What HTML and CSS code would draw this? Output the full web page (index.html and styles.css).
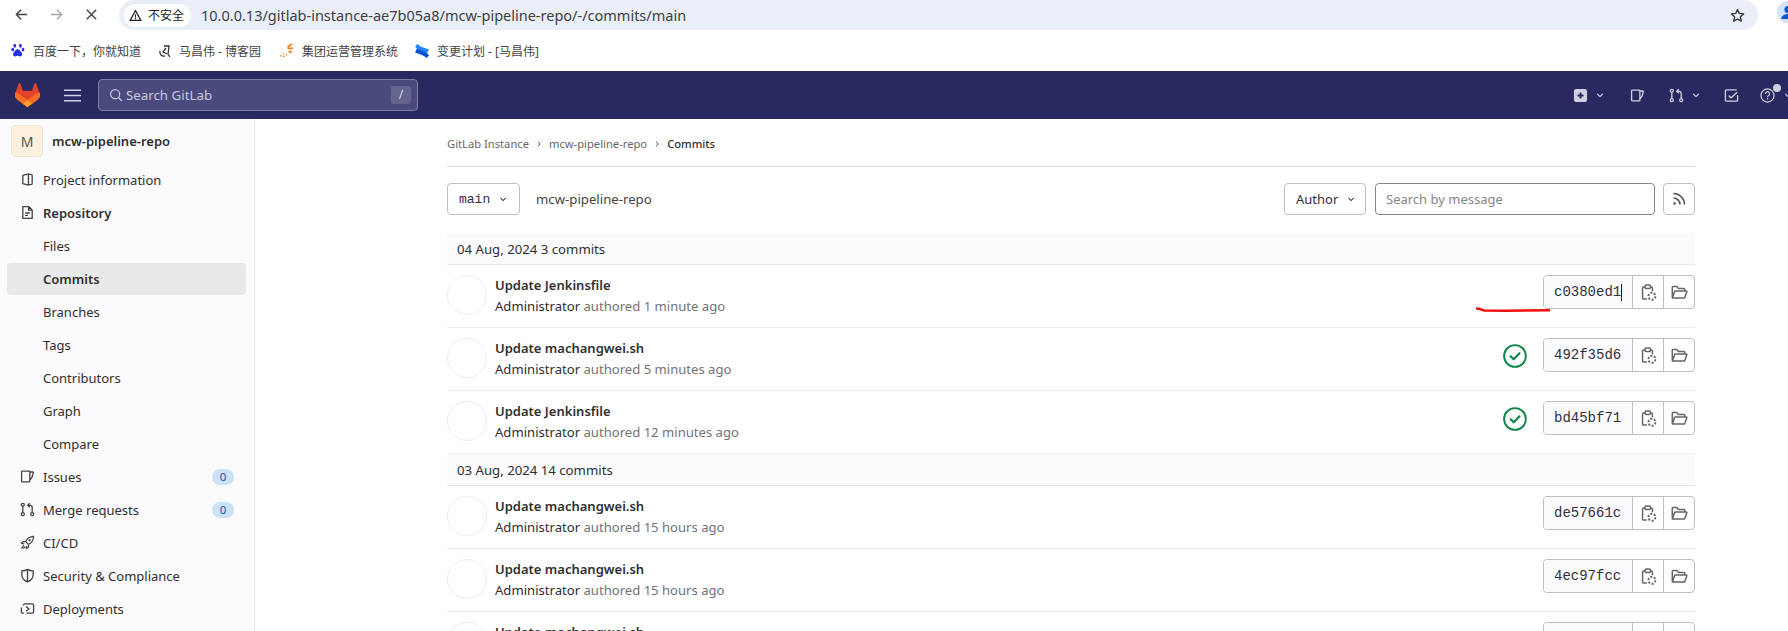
FILE: index.html
```html
<!DOCTYPE html>
<html lang="en">
<head>
  <meta charset="UTF-8">
  <title>Commits - mcw-pipeline-repo</title>
  <link rel="stylesheet" href="styles.css">
</head>
<body>
  <svg class="defs" width="0" height="0">
    <symbol id="i-chevron" viewBox="0 0 16 16"><path d="M4.22 6.22a.75.75 0 0 1 1.06 0L8 8.94l2.72-2.72a.75.75 0 1 1 1.06 1.06l-3.25 3.25a.75.75 0 0 1-1.06 0L4.22 7.28a.75.75 0 0 1 0-1.06z" fill="currentColor"/></symbol>
    <symbol id="i-issues" viewBox="0 0 16 16"><path d="M2.5 2.2h7.2a.8.8 0 0 1 .8.8v10a.8.8 0 0 1-.8.8H2.5a.8.8 0 0 1-.8-.8V3a.8.8 0 0 1 .8-.8zM10.5 3.2h3.2a.5.5 0 0 1 .5.6l-1.2 4.6-2.5 3.6" fill="none" stroke="currentColor" stroke-width="1.4" stroke-linejoin="round"/></symbol>
    <symbol id="i-mr" viewBox="0 0 16 16"><g fill="none" stroke="currentColor" stroke-width="1.4"><circle cx="3" cy="3" r="1.6"/><circle cx="3" cy="13" r="1.6"/><circle cx="13" cy="13" r="1.6"/><path d="M3 4.6v6.8M13 11.4V5.5a2 2 0 0 0-2-2H8.6M10.4 1.4 8.3 3.5l2.1 2.1"/></g></symbol>
    <symbol id="i-copy" viewBox="0 0 16 16"><g fill="none" stroke="currentColor" stroke-width="1.4"><path d="M6.5 14.2H3.4a1 1 0 0 1-1-1V3.800a1 1 0 0 1 1-1h1.400M9.800 2.800h.9a1 1 0 0 1 1 1v3"/><rect x="4.800" y="1" width="5" height="3.200" rx=".8"/><circle cx="11.200" cy="11.500" r="3.300" stroke-width="1.800" stroke-dasharray="2 1.400"/></g></symbol>
    <symbol id="i-folder" viewBox="0 0 16 16"><path d="M1.2 12.8V3.2a.8.8 0 0 1 .8-.8h3.4l1.6 1.8h5.2a.8.8 0 0 1 .8.8v1.6M1.3 13.2 3.4 7a.6.6 0 0 1 .6-.4h10.4a.5.5 0 0 1 .5.7l-1.9 5.4a.7.7 0 0 1-.7.5H1.6z" fill="none" stroke="currentColor" stroke-width="1.4" stroke-linejoin="round"/></symbol>
    <symbol id="i-check" viewBox="0 0 24 24"><circle cx="12" cy="12" r="10.9" fill="none" stroke="currentColor" stroke-width="1.9"/><path d="m7.6 12.3 3.1 3 5.8-6" fill="none" stroke="currentColor" stroke-width="2.2" stroke-linecap="round" stroke-linejoin="round"/></symbol>
  </svg>

  <div class="browser-bar">
    <div class="browser-nav">
      <svg class="bicon" viewBox="0 0 16 16"><path d="M14 8H2.5M7.5 3 2.5 8l5 5" fill="none" stroke="#444" stroke-width="1.5"/></svg>
      <svg class="bicon" viewBox="0 0 16 16"><path d="M2 8h11.5M8.5 3l5 5-5 5" fill="none" stroke="#a6a6a6" stroke-width="1.5"/></svg>
      <svg class="bicon" viewBox="0 0 16 16"><path d="m3 3 10 10M13 3 3 13" fill="none" stroke="#444" stroke-width="1.5"/></svg>
    </div>
    <div class="address">
      <span class="not-secure">
        <svg class="warn" viewBox="0 0 16 16"><path d="M8 2 14.6 14H1.4z" fill="none" stroke="#222" stroke-width="1.5"/><path d="M8 6.4v4M8 11.2v1.3" stroke="#222" stroke-width="1.3"/></svg>
        不安全
      </span>
      <span class="url">10.0.0.13/gitlab-instance-ae7b05a8/mcw-pipeline-repo/-/commits/main</span>
      <svg class="star" viewBox="0 0 16 16"><path d="m8 1.6 1.9 4.2 4.6.5-3.4 3.1.9 4.6L8 11.7 4 14l.9-4.6L1.5 6.3l4.6-.5z" fill="none" stroke="#333" stroke-width="1.4" stroke-linejoin="round"/></svg>
    </div>
    <div class="profile">
      <svg viewBox="0 0 22 22" width="22" height="22"><circle cx="11" cy="11" r="11" fill="#d3e3fd"/><circle cx="11" cy="8.5" r="3.6" fill="#0b57d0"/><path d="M4 18c1-4 4-5 7-5s6 1 7 5z" fill="#0b57d0"/></svg>
    </div>
  </div>

  <div class="bookmarks">
    <a class="bookmark bm-baidu">
      <svg viewBox="0 0 14 14" width="15" height="15"><g fill="#2932e1"><ellipse cx="3.5" cy="2.6" rx="1.3" ry="1.9"/><ellipse cx="8.8" cy="2.6" rx="1.3" ry="1.9"/><ellipse cx="1.6" cy="6.2" rx="1.3" ry="1.7"/><ellipse cx="11.2" cy="6.2" rx="1.3" ry="1.7"/><path d="M6.2 5.8c2 0 2.2 1.6 3.6 3 1.2 1.3.6 3.8-1.4 3.7-1 0-1.4-.5-2.2-.5s-1.2.5-2.2.5c-2 .1-2.6-2.4-1.4-3.7 1.4-1.4 1.6-3 3.6-3z"/></g></svg>
      百度一下，你就知道
    </a>
    <a class="bookmark bm-blog">
      <svg viewBox="0 0 14 14" width="14" height="14"><path d="M2 7a4 4 0 0 0 5 5M6 2h5l-1 8 2 3M8 4 5 8l4 2" fill="none" stroke="#333" stroke-width="1.3"/></svg>
      马昌伟 - 博客园
    </a>
    <a class="bookmark bm-group">
      <svg viewBox="0 0 14 14" width="15" height="15"><path d="M12 1 8 4M13 5H8M12 9 9 7.5" stroke="#f58220" stroke-width="1.8" fill="none"/><path d="M1 12h1.5M4 12.5h1.5M6.5 11h1M3.5 10h1" stroke="#f58220" stroke-width="1.3"/></svg>
      集团运营管理系统
    </a>
    <a class="bookmark bm-conf">
      <svg viewBox="0 0 16 16" width="16" height="16"><path d="M1 3.5 3.5 1C6 4 10 4.5 15 6.5l-2 4C9 8 5 8.5 1 3.5z" fill="#2684ff"/><path d="M15 12.5 12.5 15C10 12 6 11.5 1 9.5l2-4c4 2.5 8 2 12 7z" fill="#0052cc"/></svg>
      变更计划 - [马昌伟]
    </a>
  </div>

  <header class="navbar">
    <svg class="tanuki" viewBox="0 0 25 24">
      <path fill="#E24329" d="m24.507 9.5-.034-.09L21.082.562a.896.896 0 0 0-1.694.091l-2.29 7.01H7.825L5.535.653a.898.898 0 0 0-1.694-.09L.451 9.411.416 9.5a6.297 6.297 0 0 0 2.09 7.278l.012.01.03.022 5.16 3.867 2.56 1.935 1.554 1.176a1.051 1.051 0 0 0 1.268 0l1.555-1.176 2.56-1.935 5.197-3.89.014-.01A6.297 6.297 0 0 0 24.507 9.5Z"/>
      <path fill="#FC6D26" d="m24.507 9.5-.034-.09a11.44 11.44 0 0 0-4.56 2.051l-7.447 5.632 4.742 3.584 5.197-3.89.014-.01A6.297 6.297 0 0 0 24.507 9.5Z"/>
      <path fill="#FCA326" d="m7.707 20.677 2.56 1.935 1.555 1.176a1.051 1.051 0 0 0 1.268 0l1.555-1.176 2.56-1.935-4.743-3.584-4.755 3.584Z"/>
      <path fill="#FC6D26" d="M5.01 11.461a11.43 11.43 0 0 0-4.56-2.05L.416 9.5a6.297 6.297 0 0 0 2.09 7.278l.012.01.03.022 5.16 3.867 4.745-3.584-7.444-5.632Z"/>
    </svg>
    <svg class="hamburger" viewBox="0 0 17 13"><path d="M0 1.2h17M0 6.5h17M0 11.8h17" stroke="#d1d0e3" stroke-width="1.6"/></svg>
    <div class="nav-search">
      <svg class="nav-search-icon" viewBox="0 0 16 16"><circle cx="7" cy="7" r="5.2" fill="none" stroke="#c9c9e0" stroke-width="1.4"/><path d="m10.8 10.8 4 4" stroke="#c9c9e0" stroke-width="1.4"/></svg>
      <span class="nav-search-text">Search GitLab</span>
      <kbd class="slash">/</kbd>
    </div>
    <div class="nav-right">
      <span class="nav-item">
        <svg class="nav-icon" viewBox="0 0 16 16"><rect x="1" y="1" width="14" height="14" rx="2.5" fill="#d1d0e3"/><path d="M8 4.8v6.4M4.8 8h6.4" stroke="#292961" stroke-width="2"/></svg>
        <svg class="nav-chev"><use href="#i-chevron"/></svg>
      </span>
      <span class="nav-item"><svg class="nav-icon"><use href="#i-issues"/></svg></span>
      <span class="nav-item">
        <svg class="nav-icon"><use href="#i-mr"/></svg>
        <svg class="nav-chev"><use href="#i-chevron"/></svg>
      </span>
      <span class="nav-item"><svg class="nav-icon" viewBox="0 0 16 16"><path d="M14.5 7.5V13a1 1 0 0 1-1 1H2.5a1 1 0 0 1-1-1V3a1 1 0 0 1 1-1h11" fill="none" stroke="currentColor" stroke-width="1.4"/><path d="m5 8 2.5 2.5L14 4.5" fill="none" stroke="currentColor" stroke-width="1.4"/></svg></span>
      <span class="nav-item nav-help">
        <svg class="nav-icon" viewBox="0 0 16 16"><circle cx="8" cy="8" r="7" fill="none" stroke="currentColor" stroke-width="1.3"/><path d="M5.8 6.2a2.2 2.2 0 1 1 3.3 1.9c-.7.4-1.1.9-1.1 1.7M8 11v1.3" fill="none" stroke="currentColor" stroke-width="1.3"/></svg>
        <span class="nav-dot"></span>
        <svg class="nav-chev"><use href="#i-chevron"/></svg>
      </span>
    </div>
  </header>

  <div class="layout">
    <aside class="sidebar">
      <div class="project-head">
        <span class="project-avatar">M</span>
        <span class="project-name">mcw-pipeline-repo</span>
      </div>
      <a class="side-link">
        <svg class="side-icon" viewBox="0 0 16 16"><path d="M9 2 3 3.500v9L9 14zM9 2.500h2.500a1.500 1.500 0 0 1 1.500 1.500v8a1.500 1.500 0 0 1-1.500 1.500H9" fill="none" stroke="currentColor" stroke-width="1.4" stroke-linejoin="round"/></svg>
        Project information
      </a>
      <a class="side-link is-parent">
        <svg class="side-icon" viewBox="0 0 16 16"><path d="M3 1.800h6.500L13 5.300v8.900H3zM9.200 1.800v3.700H13M5.500 8.500h5M5.500 11h3" fill="none" stroke="currentColor" stroke-width="1.4" stroke-linejoin="round"/></svg>
        Repository
      </a>
      <a class="side-link">Files</a>
      <a class="side-link is-active">Commits</a>
      <a class="side-link">Branches</a>
      <a class="side-link">Tags</a>
      <a class="side-link">Contributors</a>
      <a class="side-link">Graph</a>
      <a class="side-link">Compare</a>
      <a class="side-link">
        <svg class="side-icon"><use href="#i-issues"/></svg>
        Issues
        <span class="badge">0</span>
      </a>
      <a class="side-link">
        <svg class="side-icon"><use href="#i-mr"/></svg>
        Merge requests
        <span class="badge">0</span>
      </a>
      <a class="side-link">
        <svg class="side-icon" viewBox="0 0 16 16"><path d="M14.5 1.5c-4 .2-6.800 2-8.500 5.500l3 3c3.500-1.700 5.300-4.500 5.500-8.500zM6 7H3L1.500 9l3 .5M9 10v3l-2 1.500-.5-3M4 11l-2.500 3.500M5.500 12.500 3.500 14.500" fill="none" stroke="currentColor" stroke-width="1.3" stroke-linejoin="round"/><circle cx="10.3" cy="5.7" r="1.2" fill="currentColor"/></svg>
        CI/CD
      </a>
      <a class="side-link">
        <svg class="side-icon" viewBox="0 0 16 16"><path d="M2 3c2.500 0 4.500-.5 6-1.500C9.500 2.500 11.500 3 14 3v4.500c0 3.500-2.500 6-6 7.300-3.500-1.300-6-3.800-6-7.300zM8 2v12.500" fill="none" stroke="currentColor" stroke-width="1.4" stroke-linejoin="round"/></svg>
        Security &amp; Compliance
      </a>
      <a class="side-link">
        <svg class="side-icon" viewBox="0 0 16 16"><path d="M4 13H3a1.500 1.500 0 0 1-1.500-1.500V7M3 4.500 5 3h8a1.500 1.500 0 0 1 1.500 1.500v7A1.500 1.500 0 0 1 13 13H7M6.500 6l3 2.500-3 2.500" fill="none" stroke="currentColor" stroke-width="1.4"/></svg>
        Deployments
      </a>
    </aside>

    <main class="content">
      <nav class="crumbs">
        <span>GitLab Instance</span>
        <svg class="crumb-sep"><use href="#i-chevron"/></svg>
        <span>mcw-pipeline-repo</span>
        <svg class="crumb-sep"><use href="#i-chevron"/></svg>
        <strong>Commits</strong>
      </nav>

      <div class="toolbar">
        <button class="btn btn-branch">main <svg class="chev"><use href="#i-chevron"/></svg></button>
        <span class="repo-path">mcw-pipeline-repo</span>
        <button class="btn btn-author">Author <svg class="chev"><use href="#i-chevron"/></svg></button>
        <input class="search-msg" type="text" placeholder="Search by message">
        <button class="btn btn-rss">
          <svg viewBox="0 0 16 16" width="16" height="16"><path d="M2.5 2.5c6 0 11 5 11 11M2.5 7c3.600 0 6.500 2.900 6.500 6.500" fill="none" stroke="#555" stroke-width="1.6"/><circle cx="3.5" cy="12.5" r="1.3" fill="#555"/></svg>
        </button>
      </div>

      <div class="day">04 Aug, 2024 3 commits</div>

      <div class="commit">
        <span class="avatar"></span>
        <div class="commit-text">
          <div class="commit-title">Update Jenkinsfile</div>
          <div class="commit-meta"><b>Administrator</b> authored 1 minute ago</div>
        </div>
        <div class="sha-group">
          <span class="sha">c0380ed1<i class="caret"></i></span>
          <span class="sha-btn"><svg><use href="#i-copy"/></svg></span>
          <span class="sha-btn"><svg><use href="#i-folder"/></svg></span>
        </div>
        <svg class="scribble" viewBox="0 0 74 6" width="74" height="6"><path d="M0 1.500 3 1.800 8 3.500 30 3.800 74 3.200" fill="none" stroke="#f01010" stroke-width="2.4"/></svg>
      </div>

      <div class="commit">
        <span class="avatar"></span>
        <div class="commit-text">
          <div class="commit-title">Update machangwei.sh</div>
          <div class="commit-meta"><b>Administrator</b> authored 5 minutes ago</div>
        </div>
        <svg class="status-ok"><use href="#i-check"/></svg>
        <div class="sha-group">
          <span class="sha">492f35d6</span>
          <span class="sha-btn"><svg><use href="#i-copy"/></svg></span>
          <span class="sha-btn"><svg><use href="#i-folder"/></svg></span>
        </div>
      </div>

      <div class="commit">
        <span class="avatar"></span>
        <div class="commit-text">
          <div class="commit-title">Update Jenkinsfile</div>
          <div class="commit-meta"><b>Administrator</b> authored 12 minutes ago</div>
        </div>
        <svg class="status-ok"><use href="#i-check"/></svg>
        <div class="sha-group">
          <span class="sha">bd45bf71</span>
          <span class="sha-btn"><svg><use href="#i-copy"/></svg></span>
          <span class="sha-btn"><svg><use href="#i-folder"/></svg></span>
        </div>
      </div>

      <div class="day">03 Aug, 2024 14 commits</div>

      <div class="commit">
        <span class="avatar"></span>
        <div class="commit-text">
          <div class="commit-title">Update machangwei.sh</div>
          <div class="commit-meta"><b>Administrator</b> authored 15 hours ago</div>
        </div>
        <div class="sha-group">
          <span class="sha">de57661c</span>
          <span class="sha-btn"><svg><use href="#i-copy"/></svg></span>
          <span class="sha-btn"><svg><use href="#i-folder"/></svg></span>
        </div>
      </div>

      <div class="commit">
        <span class="avatar"></span>
        <div class="commit-text">
          <div class="commit-title">Update machangwei.sh</div>
          <div class="commit-meta"><b>Administrator</b> authored 15 hours ago</div>
        </div>
        <div class="sha-group">
          <span class="sha">4ec97fcc</span>
          <span class="sha-btn"><svg><use href="#i-copy"/></svg></span>
          <span class="sha-btn"><svg><use href="#i-folder"/></svg></span>
        </div>
      </div>

      <div class="commit">
        <span class="avatar"></span>
        <div class="commit-text">
          <div class="commit-title">Update machangwei.sh</div>
        </div>
        <div class="sha-group">
          <span class="sha"></span>
          <span class="sha-btn"></span>
          <span class="sha-btn"></span>
        </div>
      </div>
    </main>
  </div>
</body>
</html>
```

FILE: styles.css
```css
* {
  margin: 0;
  padding: 0;
  box-sizing: border-box;
}

html, body {
  height: 100%;
  overflow: hidden;
}

body {
  display: flex;
  flex-direction: column;
  background: #fff;
  color: #303030;
  font-family: "Noto Sans", "Noto Sans CJK SC", sans-serif;
  font-size: 13px;
}

.defs {
  position: absolute;
}

/* browser chrome */
.browser-bar {
  display: flex;
  align-items: flex-start;
  height: 30px;
  flex: none;
}

.browser-nav {
  display: flex;
  gap: 20px;
  width: 119px;
  padding: 7px 0 0 14px;
}

.bicon {
  width: 15px;
  height: 15px;
}

.address {
  display: flex;
  align-items: center;
  width: 1639px;
  height: 30px;
  padding: 0 13px 0 5px;
  background: #e9eef8;
  border-radius: 15px;
}

.not-secure {
  display: flex;
  align-items: center;
  gap: 6px;
  width: 67px;
  height: 23px;
  padding-left: 5px;
  background: #fff;
  border-radius: 12px;
  font-size: 12px;
  color: #222;
}

.warn {
  width: 13px;
  height: 13px;
}

.url {
  flex: 1;
  margin-left: 10px;
  font-size: 14.5px;
  color: #3c4043;
}

.star {
  width: 15px;
  height: 15px;
}

.profile {
  margin: 1px 0 0 19px;
  width: 11px;
  overflow: hidden;
}

.bookmarks {
  display: flex;
  align-items: center;
  height: 41px;
  flex: none;
  padding-left: 11px;
  font-size: 12px;
  color: #444;
}

.bookmark {
  display: flex;
  align-items: center;
  gap: 7px;
  white-space: nowrap;
}

.bm-baidu { width: 147px; }
.bm-blog { width: 121px; }
.bm-group { width: 135px; gap: 8px; }

/* gitlab navbar */
.navbar {
  display: flex;
  align-items: center;
  height: 48px;
  flex: none;
  padding-left: 15px;
  background: #292961;
  color: #d1d0e3;
}

.tanuki {
  width: 25px;
  height: 24px;
}

.hamburger {
  width: 17px;
  height: 13px;
  margin: 0 17px 0 24px;
}

.nav-search {
  display: flex;
  align-items: center;
  width: 320px;
  height: 32px;
  padding: 0 6px 0 10px;
  background: #4a4a7c;
  border: 1px solid #7c7ca6;
  border-radius: 4px;
}

.nav-search-icon {
  width: 14px;
  height: 14px;
}

.nav-search-text {
  flex: 1;
  margin-left: 3px;
  font-size: 13.3px;
  color: #c9c9e0;
}

.slash {
  width: 20px;
  height: 18px;
  line-height: 18px;
  text-align: center;
  background: #64648f;
  border-radius: 2px;
  font-family: "Noto Sans", sans-serif;
  font-size: 12px;
  color: #d9d9ea;
}

.nav-right {
  display: flex;
  align-items: center;
  margin-left: auto;
  margin-right: -6px;
}

.nav-item {
  display: flex;
  align-items: center;
  position: relative;
}

.nav-item:nth-child(1) { width: 57px; }
.nav-item:nth-child(2) { width: 39px; }
.nav-item:nth-child(3) { width: 55px; }
.nav-item:nth-child(4) { width: 36px; }

.nav-icon {
  width: 15px;
  height: 15px;
  margin-right: 6px;
}

.nav-chev {
  width: 12px;
  height: 12px;
}

.nav-help .nav-chev {
  margin-left: 1px;
}

.nav-dot {
  position: absolute;
  top: -4px;
  left: 13px;
  width: 8px;
  height: 8px;
  border-radius: 50%;
  background: #d1d0e3;
}

/* main layout */
.layout {
  display: flex;
  flex: 1;
  min-height: 0;
}

.sidebar {
  width: 255px;
  flex: none;
  padding: 6px 8px 0 7px;
  background: #fbfafd;
  border-right: 1px solid #eaeaea;
  overflow: hidden;
}

.project-head {
  display: flex;
  align-items: center;
  gap: 9px;
  height: 32px;
  padding-left: 4px;
  margin-bottom: 6px;
}

.project-avatar {
  display: flex;
  align-items: center;
  justify-content: center;
  width: 32px;
  height: 32px;
  background: #fdf1dd;
  border: 1px solid #f1e6d2;
  border-radius: 4px;
  font-size: 14px;
  color: #555;
}

.project-name {
  font-weight: 600;
  font-size: 13px;
}

.side-link {
  display: flex;
  align-items: center;
  height: 33px;
  padding: 0 12px 0 36px;
  position: relative;
  border-radius: 4px;
  white-space: nowrap;
}

.side-icon {
  position: absolute;
  left: 13px;
  top: 9px;
  width: 15px;
  height: 15px;
  color: #444;
}

.is-parent {
  font-weight: 600;
}

.is-active {
  height: 32px;
  margin-top: 1px;
  background: #e9e9e9;
  font-weight: 600;
}

.badge {
  margin-left: auto;
  width: 22px;
  height: 16px;
  line-height: 16px;
  text-align: center;
  background: #cbe2f9;
  border-radius: 8px;
  font-size: 11.5px;
  color: #0b5cad;
}

.content {
  flex: 1;
  min-width: 0;
  padding: 0 93px 0 192px;
  overflow: hidden;
}

.crumbs {
  display: flex;
  align-items: center;
  gap: 5px;
  height: 48px;
  padding-top: 2px;
  border-bottom: 1px solid #dcdcde;
  font-size: 11.2px;
  color: #666;
}

.crumbs strong {
  font-weight: 500;
  color: #303030;
}

.crumb-sep {
  width: 10px;
  height: 10px;
  transform: rotate(-90deg);
}

.toolbar {
  display: flex;
  align-items: center;
  height: 32px;
  margin: 16px 0 18px;
}

.btn {
  display: flex;
  align-items: center;
  height: 32px;
  background: #fff;
  border: 1px solid #bfbfc3;
  border-radius: 4px;
  color: #303030;
  font-family: inherit;
  font-size: 13px;
}

.chev {
  width: 12px;
  height: 12px;
  color: #555;
}

.btn-branch {
  width: 73px;
  gap: 7px;
  padding-left: 11px;
  font-family: "Liberation Mono", monospace;
  font-size: 13px;
}

.repo-path {
  margin-left: 16px;
  font-size: 13.2px;
  color: #444;
}

.btn-author {
  width: 82px;
  gap: 7px;
  margin-left: auto;
  padding-left: 11px;
}

.search-msg {
  width: 280px;
  height: 32px;
  margin: 0 8px 0 9px;
  padding: 0 10px;
  background: #fff;
  border: 1px solid #868686;
  border-radius: 4px;
  font-family: inherit;
  font-size: 13px;
}

.search-msg::placeholder {
  color: #868686;
}

.btn-rss {
  width: 32px;
  justify-content: center;
}

.day {
  display: flex;
  align-items: center;
  height: 32px;
  padding-left: 10px;
  background: #fbfafd;
  border-bottom: 1px solid #e8e8e8;
  font-size: 13.2px;
}

.commit {
  display: flex;
  align-items: flex-start;
  position: relative;
  height: 63px;
  flex: none;
  padding-top: 10px;
  border-bottom: 1px solid #ececef;
}

.avatar {
  width: 40px;
  height: 40px;
  flex: none;
  border: 1px solid #ececef;
  border-radius: 50%;
}

.commit-text {
  flex: 1;
  margin-left: 8px;
}

.commit-title {
  font-weight: 600;
  line-height: 20px;
  font-size: 13px;
}

.commit-meta {
  line-height: 22px;
  font-size: 13.1px;
  color: #737278;
}

.commit-meta b {
  font-weight: 400;
  color: #303030;
}

.status-ok {
  width: 24px;
  height: 24px;
  margin: 6px 16px 0 0;
  color: #108548;
}

.sha-group {
  display: flex;
  height: 34px;
  border: 1px solid #bfbfc3;
  border-radius: 4px;
  overflow: hidden;
}

.sha {
  display: flex;
  align-items: center;
  width: 88px;
  padding-left: 10px;
  background: #fbfafd;
  font-family: "Liberation Mono", monospace;
  font-size: 14px;
  color: #303040;
}

.caret {
  width: 1px;
  height: 17px;
  background: #222;
}

.sha-btn {
  display: flex;
  align-items: center;
  justify-content: center;
  width: 31px;
  border-left: 1px solid #bfbfc3;
  color: #666;
}

.sha-btn svg {
  width: 17px;
  height: 17px;
}

/* red pen mark drawn over the screenshot */
.scribble {
  position: absolute;
  right: 145px;
  top: 42px;
}
```
